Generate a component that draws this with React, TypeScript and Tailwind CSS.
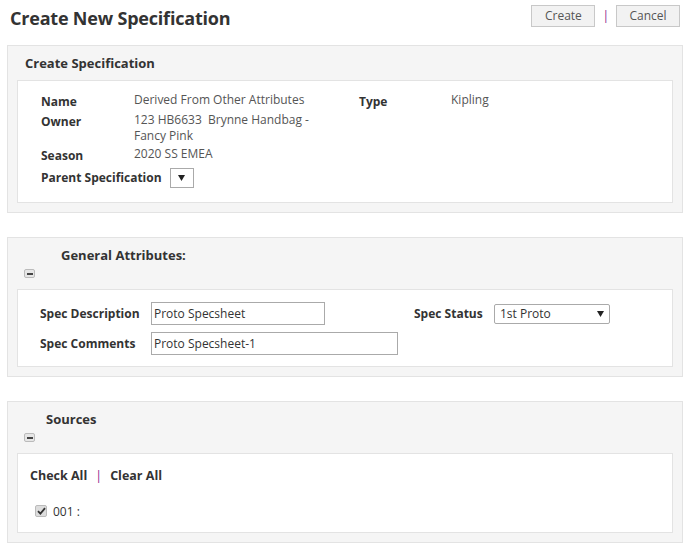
import React from "react";

// ---------- Small pieces ----------
const Collapse = () => (
    <div className="ml-[16px] mt-[2px] flex h-[9px] w-[11px] items-center justify-center rounded-[2px] border border-[#bbb] bg-[#e6e6e6]">
        <div className="h-[2px] w-[6px] bg-[#444]" />
    </div>
);

const Arrow = () => (
    <svg width="7" height="6" viewBox="0 0 7 6">
        <path d="M0 0 H7 L3.5 6 Z" fill="#222" />
    </svg>
);

const Label = ({ children, className = "" }: { children: React.ReactNode; className?: string }) => (
    <div className={`font-bold text-[#333] ${className}`}>{children}</div>
);

const Value = ({ children }: { children: React.ReactNode }) => (
    <div className="-mt-[2px] text-[#555]">{children}</div>
);

// ---------- Component ----------
export default function App() {
    return (
        <div
            className="h-[549px] w-[690px] bg-white text-[12px] leading-[16px] text-[#333]"
            style={{ fontFamily: '"Open Sans", "Liberation Sans", sans-serif' }}
        >
            {/* Top bar */}
            <div className="flex h-[45px] items-start justify-between pl-[10px] pr-[10px] pt-[5px]">
                <h1 className="mt-[1px] text-[18px] font-bold leading-[24px] tracking-[-0.2px] text-[#333]">
                    Create New Specification
                </h1>
                <div className="flex items-center">
                    <button className="h-[22px] w-[64px] border border-[#c8c8c8] bg-[#f2f2f2] text-[12px] text-[#555]">
                        Create
                    </button>
                    <span className="mx-[7px] text-[#8b1a8b]">|</span>
                    <button className="h-[22px] w-[64px] border border-[#c8c8c8] bg-[#f2f2f2] text-[12px] text-[#555]">
                        Cancel
                    </button>
                </div>
            </div>

            {/* Create Specification */}
            <div className="mx-[7px] border border-[#e3e3e3] bg-[#f5f5f5] px-[9px] pb-[9px]">
                <div className="flex h-[34px] items-center pl-[8px] text-[13px] font-bold text-[#333]">
                    Create Specification
                </div>
                <div className="border border-[#e3e3e3] bg-white pb-[14px] pl-[23px] pt-[13px]">
                    <div className="flex">
                        <div className="w-[318px]">
                            <div className="flex">
                                <Label className="w-[93px]">Name</Label>
                                <Value>Derived From Other Attributes</Value>
                            </div>
                            <div className="mt-[4px] flex">
                                <Label className="w-[93px]">Owner</Label>
                                <Value>
                                    123 HB6633&nbsp; Brynne Handbag -<br />
                                    Fancy Pink
                                </Value>
                            </div>
                            <div className="mt-[4px] flex">
                                <Label className="w-[93px]">Season</Label>
                                <Value>2020 SS EMEA</Value>
                            </div>
                        </div>
                        <div className="flex">
                            <Label className="w-[92px]">Type</Label>
                            <Value>Kipling</Value>
                        </div>
                    </div>
                    <div className="mt-[4px] flex items-center">
                        <Label>Parent Specification</Label>
                        <div className="ml-[8px] flex h-[20px] w-[24px] items-center justify-center border border-[#aaa] bg-white">
                            <Arrow />
                        </div>
                    </div>
                </div>
            </div>

            {/* General Attributes */}
            <div className="mx-[7px] mt-[24px] border border-[#e3e3e3] bg-[#f5f5f5] px-[9px] pb-[9px]">
                <div className="pt-[8px] pl-[44px] text-[13px] font-bold leading-[18px] text-[#333]">
                    General Attributes:
                </div>
                <div className="h-[25px] pt-[3px]">
                    <div className="-ml-[9px]">
                        <Collapse />
                    </div>
                </div>
                <div className="flex border border-[#e3e3e3] bg-white pb-[11px] pl-[22px] pt-[12px]">
                    <div className="w-[374px]">
                        <div className="flex items-center">
                            <Label className="w-[111px] text-[12px]">Spec Description</Label>
                            <input
                                readOnly
                                value="Proto Specsheet"
                                className="h-[23px] w-[174px] border border-[#aaa] px-[2px] text-[12px] text-[#333] outline-none"
                            />
                        </div>
                        <div className="mt-[7px] flex items-center">
                            <Label className="w-[111px]">Spec Comments</Label>
                            <input
                                readOnly
                                value="Proto Specsheet-1"
                                className="h-[23px] w-[247px] border border-[#aaa] px-[2px] text-[12px] text-[#333] outline-none"
                            />
                        </div>
                    </div>
                    <div className="flex h-[23px] items-center">
                        <Label className="w-[80px]">Spec Status</Label>
                        <div className="flex h-[20px] w-[116px] items-center justify-between rounded-[2px] border border-[#aaa] bg-white pl-[5px] pr-[5px] text-[#333]">
                            <span>1st Proto</span>
                            <Arrow />
                        </div>
                    </div>
                </div>
            </div>

            {/* Sources */}
            <div className="mx-[7px] mt-[24px] border border-[#e3e3e3] bg-[#f5f5f5] px-[9px] pb-[9px]">
                <div className="pt-[8px] pl-[29px] text-[13px] font-bold leading-[18px] text-[#333]">
                    Sources
                </div>
                <div className="h-[25px] pt-[3px]">
                    <div className="-ml-[9px]">
                        <Collapse />
                    </div>
                </div>
                <div className="border border-[#e3e3e3] bg-white pb-[12px] pl-[12px] pt-[14px]">
                    <div className="flex items-center text-[12.5px] font-bold text-[#333]">
                        <span>Check All</span>
                        <span className="mx-[8px] font-normal text-[#8b1a8b]">|</span>
                        <span>Clear All</span>
                    </div>
                    <div className="mt-[17px] flex items-center pl-[5px]">
                        <div className="flex h-[12px] w-[12px] items-center justify-center rounded-[2px] border border-[#bbb] bg-[#ddd]">
                            <svg width="9" height="8" viewBox="0 0 9 8">
                                <path d="M1 4.2 L3.4 6.6 L8 1.2" stroke="#333" strokeWidth="1.8" fill="none" />
                            </svg>
                        </div>
                        <span className="ml-[6px] mt-[3px] text-[#333]">001 :</span>
                    </div>
                </div>
            </div>
        </div>
    );
}
